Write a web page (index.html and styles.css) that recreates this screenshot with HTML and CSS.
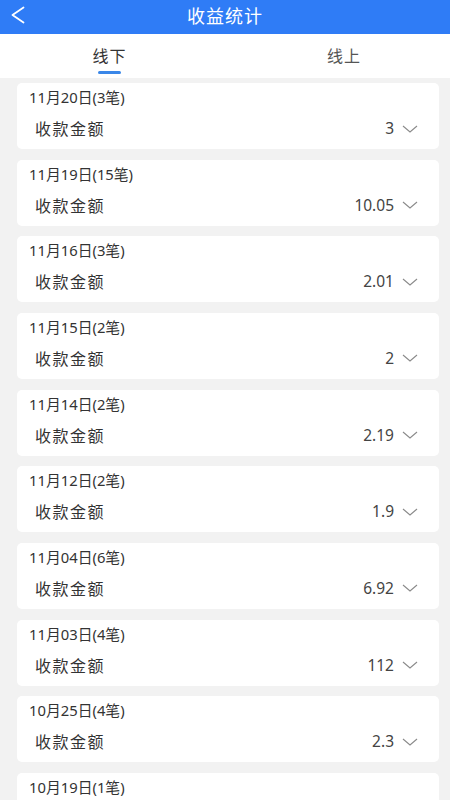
FILE: index.html
```html
<!DOCTYPE html>
<html lang="zh">
<head>
<meta charset="utf-8">
<link rel="stylesheet" href="styles.css">
</head>
<body>
<div class="page">
  <header class="topbar">
    <svg class="back" width="14" height="18" viewBox="0 0 14 18"><polyline points="12.5,1.5 1.5,9 12.5,16.5" fill="none" stroke="#fff" stroke-width="1.8" stroke-linecap="round" stroke-linejoin="round"/></svg>
    <div class="title">收益统计</div>
  </header>
  <nav class="tabs">
    <div class="tab active"><span>线下</span><i class="bar"></i></div>
    <div class="tab second"><span>线上</span></div>
  </nav>
  <main class="list">
    <section class="card"><div class="date">11月20日(3笔)</div><div class="row"><span class="label">收款金额</span><span class="val">3</span><svg class="chev" width="16" height="8" viewBox="0 0 16 8"><polyline points="1,1 8,7 15,1" fill="none" stroke="#8a8a8a" stroke-width="1.1"/></svg></div></section>
    <section class="card"><div class="date">11月19日(15笔)</div><div class="row"><span class="label">收款金额</span><span class="val">10.05</span><svg class="chev" width="16" height="8" viewBox="0 0 16 8"><polyline points="1,1 8,7 15,1" fill="none" stroke="#8a8a8a" stroke-width="1.1"/></svg></div></section>
    <section class="card"><div class="date">11月16日(3笔)</div><div class="row"><span class="label">收款金额</span><span class="val">2.01</span><svg class="chev" width="16" height="8" viewBox="0 0 16 8"><polyline points="1,1 8,7 15,1" fill="none" stroke="#8a8a8a" stroke-width="1.1"/></svg></div></section>
    <section class="card"><div class="date">11月15日(2笔)</div><div class="row"><span class="label">收款金额</span><span class="val">2</span><svg class="chev" width="16" height="8" viewBox="0 0 16 8"><polyline points="1,1 8,7 15,1" fill="none" stroke="#8a8a8a" stroke-width="1.1"/></svg></div></section>
    <section class="card"><div class="date">11月14日(2笔)</div><div class="row"><span class="label">收款金额</span><span class="val">2.19</span><svg class="chev" width="16" height="8" viewBox="0 0 16 8"><polyline points="1,1 8,7 15,1" fill="none" stroke="#8a8a8a" stroke-width="1.1"/></svg></div></section>
    <section class="card"><div class="date">11月12日(2笔)</div><div class="row"><span class="label">收款金额</span><span class="val">1.9</span><svg class="chev" width="16" height="8" viewBox="0 0 16 8"><polyline points="1,1 8,7 15,1" fill="none" stroke="#8a8a8a" stroke-width="1.1"/></svg></div></section>
    <section class="card"><div class="date">11月04日(6笔)</div><div class="row"><span class="label">收款金额</span><span class="val">6.92</span><svg class="chev" width="16" height="8" viewBox="0 0 16 8"><polyline points="1,1 8,7 15,1" fill="none" stroke="#8a8a8a" stroke-width="1.1"/></svg></div></section>
    <section class="card"><div class="date">11月03日(4笔)</div><div class="row"><span class="label">收款金额</span><span class="val">112</span><svg class="chev" width="16" height="8" viewBox="0 0 16 8"><polyline points="1,1 8,7 15,1" fill="none" stroke="#8a8a8a" stroke-width="1.1"/></svg></div></section>
    <section class="card"><div class="date">10月25日(4笔)</div><div class="row"><span class="label">收款金额</span><span class="val">2.3</span><svg class="chev" width="16" height="8" viewBox="0 0 16 8"><polyline points="1,1 8,7 15,1" fill="none" stroke="#8a8a8a" stroke-width="1.1"/></svg></div></section>
    <section class="card"><div class="date">10月19日(1笔)</div></section>
  </main>
</div>
</body>
</html>
```
FILE: styles.css
```css
html, body {
  margin: 0;
  padding: 0;
  height: 800px;
  overflow: hidden;
  background: #f2f2f2;
  font-family: "Noto Sans CJK SC", "Noto Sans", sans-serif;
}
.page {
  width: 450px;
  height: 800px;
  overflow: hidden;
  background: #f2f2f2;
}
.topbar {
  height: 34px;
  background: #2f7cf6;
  position: relative;
  display: flex;
  align-items: center;
  justify-content: center;
}
.back {
  position: absolute;
  left: 11px;
  top: 6px;
}
.title {
  color: #fff;
  font-size: 18px;
  letter-spacing: 1px;
  line-height: 26px;
  margin-top: -4px;
}
.tabs {
  height: 44px;
  background: #fff;
  display: grid;
  grid-template-columns: 219px 1fr;
}
.tab {
  position: relative;
  display: flex;
  justify-content: center;
  font-size: 16px;
  letter-spacing: 1px;
  color: #555;
  line-height: 22px;
  padding-top: 10px;
  box-sizing: border-box;
}
.tab.active {
  color: #333;
}
.tab.second {
  padding-left: 19px;
}
.bar {
  position: absolute;
  left: 98px;
  top: 37px;
  width: 23px;
  height: 3px;
  border-radius: 2px;
  background: #3a87e8;
}
.list {
  padding: 5px 11px 0 17px;
  display: flex;
  flex-direction: column;
  gap: 10.67px;
}
.card {
  background: #fff;
  border-radius: 5px;
  height: 66px;
  box-sizing: border-box;
  padding: 0 21px 0 12px;
  flex-shrink: 0;
}
.date {
  font-family: "Noto Sans", "Noto Sans CJK SC", sans-serif;
  font-size: 14.8px;
  line-height: 28px;
  color: #333;
}
.row {
  display: flex;
  align-items: center;
  height: 34px;
}
.label {
  font-size: 16px;
  letter-spacing: 1.5px;
  color: #333;
  padding-left: 6px;
  flex: 1;
}
.val {
  font-family: "Noto Sans", "Noto Sans CJK SC", sans-serif;
  font-size: 15.5px;
  color: #444;
  margin-right: 8px;
}
.chev {
  display: block;
  margin-top: 1px;
}
```
